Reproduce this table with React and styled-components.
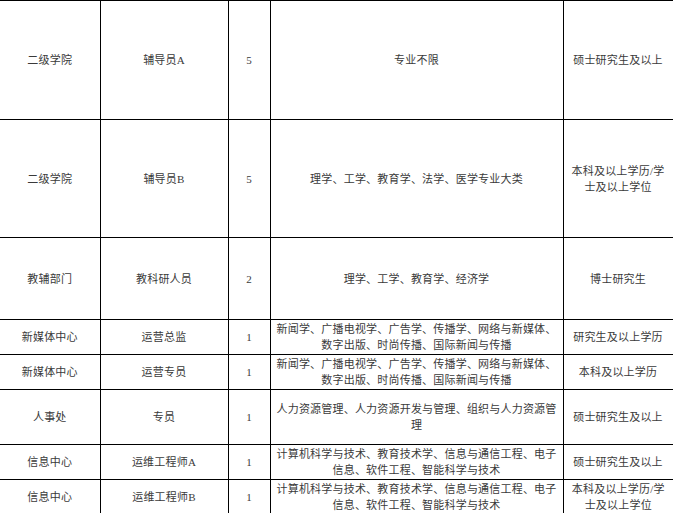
import React from 'react'
import styled, { createGlobalStyle } from 'styled-components'

const Global = createGlobalStyle`
  html, body { margin: 0; padding: 0; background: #fff; }
  body {
    font-family: "Liberation Serif", "Noto Sans CJK SC", serif;
    color: #3a3a3a;
  }
`

const Table = styled.table`
  width: 673px;
  table-layout: fixed;
  border-collapse: collapse;
  font-size: 11px;
  line-height: 16px;
`

const Col = styled.col`
  width: ${p => p.w}px;
`

const Row = styled.tr`
  height: ${p => p.h}px;
`

const Cell = styled.td`
  border-top: 1px solid #000;
  border-left: ${p => (p.first ? 'none' : '1px solid #000')};
  border-right: ${p => (p.last && !p.open ? '1px solid #000' : 'none')};
  padding: 0 3px;
  text-align: center;
  vertical-align: middle;
  letter-spacing: 0.2px;
  overflow: hidden;
`

const widths = [100, 128, 42, 293, 110]

const rows = [
  { h: 119, dept: '二级学院', post: '辅导员A', n: 5, major: ['专业不限'], edu: ['硕士研究生及以上'] },
  { h: 118, dept: '二级学院', post: '辅导员B', n: 5, major: ['理学、工学、教育学、法学、医学专业大类'], edu: ['本科及以上学历/学', '士及以上学位'] },
  { h: 82, dept: '教辅部门', post: '教科研人员', n: 2, major: ['理学、工学、教育学、经济学'], edu: ['博士研究生'] },
  { h: 35, dept: '新媒体中心', post: '运营总监', n: 1, major: ['新闻学、广播电视学、广告学、传播学、网络与新媒体、', '数字出版、时尚传播、国际新闻与传播'], edu: ['研究生及以上学历'] },
  { h: 35, dept: '新媒体中心', post: '运营专员', n: 1, major: ['新闻学、广播电视学、广告学、传播学、网络与新媒体、', '数字出版、时尚传播、国际新闻与传播'], edu: ['本科及以上学历'] },
  { h: 55, dept: '人事处', post: '专员', n: 1, major: ['人力资源管理、人力资源开发与管理、组织与人力资源管', '理'], edu: ['硕士研究生及以上'] },
  { h: 35, dept: '信息中心', post: '运维工程师A', n: 1, major: ['计算机科学与技术、教育技术学、信息与通信工程、电子', '信息、软件工程、智能科学与技术'], edu: ['硕士研究生及以上'] },
  { h: 35, dept: '信息中心', post: '运维工程师B', n: 1, major: ['计算机科学与技术、教育技术学、信息与通信工程、电子', '信息、软件工程、智能科学与技术'], edu: ['本科及以上学历/学', '士及以上学位'], open: true },
]

function Lines({ items }) {
  return items.map((t, i) => (
    <React.Fragment key={i}>
      {i > 0 && <br />}
      {t}
    </React.Fragment>
  ))
}

export default function App() {
  return (
    <>
      <Global />
      <Table>
        <colgroup>
          {widths.map((w, i) => <Col key={i} w={w} />)}
        </colgroup>
        <tbody>
          {rows.map((r, i) => (
            <Row key={i} h={r.h}>
              <Cell first>{r.dept}</Cell>
              <Cell>{r.post}</Cell>
              <Cell>{r.n}</Cell>
              <Cell><Lines items={r.major} /></Cell>
              <Cell last open={r.open}><Lines items={r.edu} /></Cell>
            </Row>
          ))}
        </tbody>
      </Table>
    </>
  )
}
